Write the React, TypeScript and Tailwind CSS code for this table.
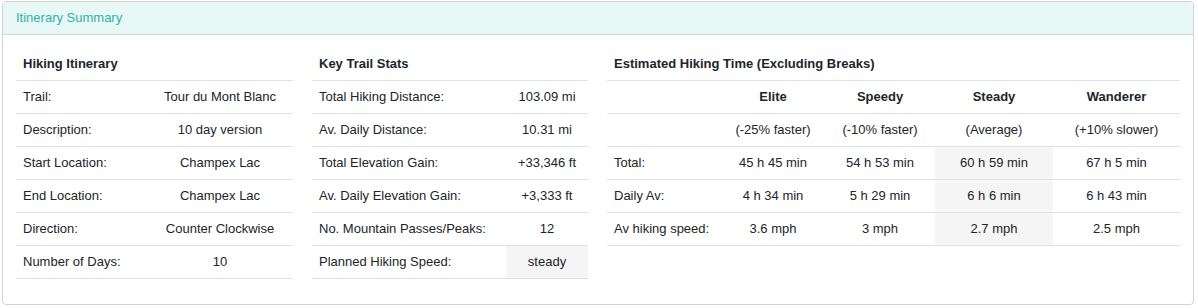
import React from 'react';

type Row = { label: string; value: string; highlight?: boolean };

const itinerary: Row[] = [
  { label: 'Trail:', value: 'Tour du Mont Blanc' },
  { label: 'Description:', value: '10 day version' },
  { label: 'Start Location:', value: 'Champex Lac' },
  { label: 'End Location:', value: 'Champex Lac' },
  { label: 'Direction:', value: 'Counter Clockwise' },
  { label: 'Number of Days:', value: '10' },
];

const stats: Row[] = [
  { label: 'Total Hiking Distance:', value: '103.09 mi' },
  { label: 'Av. Daily Distance:', value: '10.31 mi' },
  { label: 'Total Elevation Gain:', value: '+33,346 ft' },
  { label: 'Av. Daily Elevation Gain:', value: '+3,333 ft' },
  { label: 'No. Mountain Passes/Peaks:', value: '12' },
  { label: 'Planned Hiking Speed:', value: 'steady', highlight: true },
];

const speeds = ['Elite', 'Speedy', 'Steady', 'Wanderer'];
const notes = ['(-25% faster)', '(-10% faster)', '(Average)', '(+10% slower)'];
const times = [
  { label: 'Total:', values: ['45 h 45 min', '54 h 53 min', '60 h 59 min', '67 h 5 min'] },
  { label: 'Daily Av:', values: ['4 h 34 min', '5 h 29 min', '6 h 6 min', '6 h 43 min'] },
  { label: 'Av hiking speed:', values: ['3.6 mph', '3 mph', '2.7 mph', '2.5 mph'] },
];
const activeSpeed = 2;

function KeyValueTable({ title, rows, labelWidth, width }: { title: string; rows: Row[]; labelWidth: string; width: string }) {
  return (
    <table className={`table-fixed ${width}`}>
      <colgroup>
        <col className={labelWidth} />
        <col />
      </colgroup>
      <thead>
        <tr className="border-b border-[#dee2e6]">
          <th colSpan={2} className="text-left font-bold px-[7px] pt-[9px] pb-[8px] leading-[17px]">{title}</th>
        </tr>
      </thead>
      <tbody>
        {rows.map((row) => (
          <tr key={row.label} className="border-b border-[#dee2e6]">
            <td className="px-[7px] py-2 leading-4">{row.label}</td>
            <td className={`px-[7px] py-2 leading-4 text-center ${row.highlight ? 'bg-[#f5f5f5]' : ''}`}>{row.value}</td>
          </tr>
        ))}
      </tbody>
    </table>
  );
}

export default function App() {
  return (
    <div className="pl-[2px] pt-[1px] bg-white font-['Liberation_Sans',Arial,sans-serif] text-[13px] text-[#212529]">
      <div className="w-[1192px] border border-[#d2d2d2] rounded-[4px] overflow-hidden">
        <div className="h-[33px] bg-[#e8f8f7] border-b border-[#c5d9d7] px-[13px] flex items-center text-[#2fb3a4] text-[13px]">
          Itinerary Summary
        </div>

        <div className="flex items-start gap-[19px] px-[13px] pt-[11px] pb-[25px]">
          <KeyValueTable title="Hiking Itinerary" rows={itinerary} labelWidth="w-[131px]" width="w-[277px]" />
          <KeyValueTable title="Key Trail Stats" rows={stats} labelWidth="w-[194px]" width="w-[276px]" />

          <table className="table-fixed w-[573px]">
            <colgroup>
              <col className="w-[114px]" />
              <col className="w-[104px]" />
              <col className="w-[110px]" />
              <col className="w-[118px]" />
              <col />
            </colgroup>
            <thead>
              <tr className="border-b border-[#dee2e6]">
                <th colSpan={5} className="text-left font-bold px-[7px] pt-[9px] pb-[8px] leading-[17px]">
                  Estimated Hiking Time (Excluding Breaks)
                </th>
              </tr>
              <tr className="border-b border-[#dee2e6]">
                <th className="px-[7px] py-2 leading-4"></th>
                {speeds.map((s) => (
                  <th key={s} className="px-[7px] py-2 leading-4 text-center font-bold">{s}</th>
                ))}
              </tr>
            </thead>
            <tbody>
              <tr className="border-b border-[#dee2e6]">
                <td className="px-[7px] py-2 leading-4"></td>
                {notes.map((n) => (
                  <td key={n} className="px-[7px] py-2 leading-4 text-center">{n}</td>
                ))}
              </tr>
              {times.map((row) => (
                <tr key={row.label} className="border-b border-[#dee2e6]">
                  <td className="px-[7px] py-2 leading-4">{row.label}</td>
                  {row.values.map((v, i) => (
                    <td
                      key={i}
                      className={`px-[7px] py-2 leading-4 text-center ${i === activeSpeed ? 'bg-[#f5f5f5]' : ''}`}
                    >
                      {v}
                    </td>
                  ))}
                </tr>
              ))}
            </tbody>
          </table>
        </div>
      </div>
    </div>
  );
}
